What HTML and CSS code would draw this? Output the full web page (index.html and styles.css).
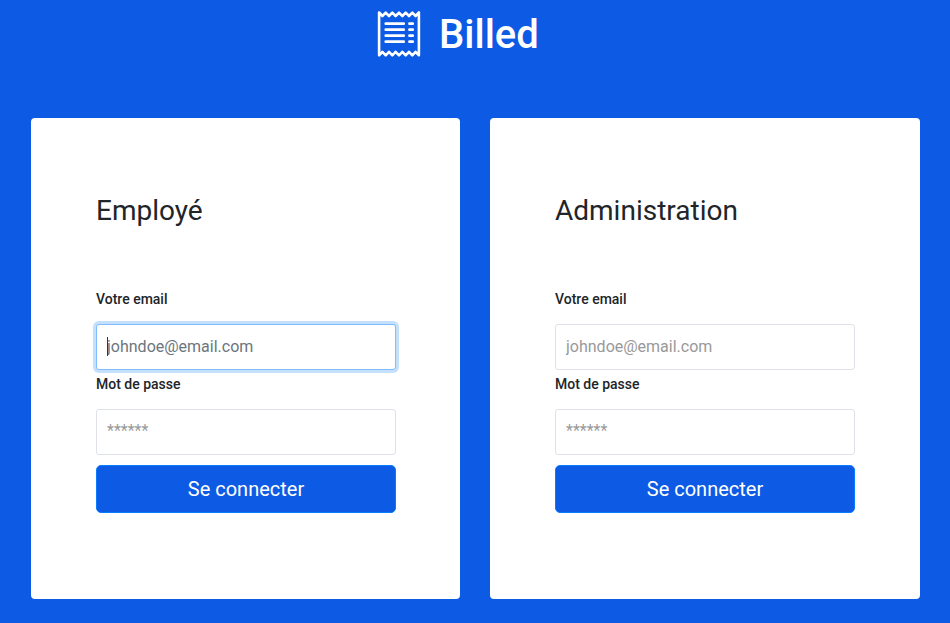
FILE: index.html
```
<!DOCTYPE html>
<html lang="fr">
<head>
<meta charset="utf-8">
<title>Billed</title>
<link rel="stylesheet" href="styles.css">
</head>
<body>
<header class="brand">
  <svg class="brand-icon" width="44" height="48" viewBox="0 0 44 48" fill="none" stroke="#fff" stroke-width="2.6" stroke-linecap="round" stroke-linejoin="round">
    <path d="M2.1 2.5L5.4 6L8.7 2.7L12 6L15.3 2.7L18.6 6L22 2.7L25.4 6L28.7 2.7L32 6L35.3 2.7L38.6 6L41.9 2.5V45.3L38.6 41.8L35.3 45.3L32 41.8L28.7 45.3L25.4 41.8L22 45.3L18.6 41.8L15.3 45.3L12 41.8L8.7 45.3L5.4 41.8L2.1 45.3Z"/>
    <path stroke-width="2.8" d="M8.8 13.7H26.7M8.8 19.7H26.7M8.8 25.7H26.7M8.8 31.7H26.7M32.5 13.7H35.7M32.5 19.7H35.7M32.5 25.7H35.7M32.5 31.7H35.7"/>
  </svg>
  <h1 class="brand-name">Billed</h1>
</header>
<main class="cards">
  <form class="card">
    <h2 class="card-title">Employé</h2>
    <label class="label" for="employee-email">Votre email</label>
    <div class="field field-active"><input class="input" id="employee-email" type="email" placeholder="johndoe@email.com"></div>
    <label class="label" for="employee-password">Mot de passe</label>
    <div class="field"><input class="input" id="employee-password" type="password" placeholder="******"></div>
    <button class="submit" type="submit">Se connecter</button>
  </form>
  <form class="card">
    <h2 class="card-title">Administration</h2>
    <label class="label" for="admin-email">Votre email</label>
    <div class="field"><input class="input" id="admin-email" type="email" placeholder="johndoe@email.com"></div>
    <label class="label" for="admin-password">Mot de passe</label>
    <div class="field"><input class="input" id="admin-password" type="password" placeholder="******"></div>
    <button class="submit" type="submit">Se connecter</button>
  </form>
</main>
</body>
</html>
```
FILE: styles.css
```
* {
  box-sizing: border-box;
}

body {
  margin: 0;
  height: 623px;
  overflow: hidden;
  background: #0d5ae5;
  color: #212529;
  font-family: Roboto, sans-serif;
}

.brand {
  display: flex;
  height: 118px;
  padding: 10px 0 0 377px;
}

.brand-icon {
  flex: none;
  margin-right: 18px;
}

.brand-name {
  margin: 0;
  color: #fff;
  font-size: 40px;
  font-weight: 500;
  line-height: 50px;
}

.cards {
  display: grid;
  grid-template-columns: 429px 430px;
  gap: 30px;
  padding: 0 30px 0 31px;
}

.card {
  height: 481px;
  padding: 76px 0 0 65px;
  border-radius: 4px;
  background: #fff;
}

.card-title {
  margin: 0 0 63px;
  font-size: 28px;
  font-weight: 400;
  line-height: 34px;
}

.label {
  display: block;
  height: 33px;
  font-size: 14px;
  font-weight: 500;
  line-height: 16px;
}

.field {
  position: relative;
  width: 300px;
  height: 46px;
  margin-bottom: 6px;
  border: 1px solid #dfe2e9;
  border-radius: 3px;
  background: #fff;
}

.input {
  display: block;
  width: 100%;
  height: 42px;
  padding: 0 10px;
  border: 0;
  outline: 0;
  background: transparent;
  font: 400 16px/24px Roboto, sans-serif;
}

.input[type="password"] {
  height: 40px;
}

.input::placeholder {
  color: #999;
  opacity: 1;
}

.field-active {
  border-color: #80bdff;
  box-shadow: 0 0 0 3px #c5e0fd;
}

.field-active .input::placeholder {
  color: #6c757d;
}

/* Text caret of the active field */
.field-active::before {
  content: "";
  position: absolute;
  top: 12px;
  left: 10px;
  width: 1px;
  height: 19px;
  background: #24375a;
}

.submit {
  display: block;
  width: 300px;
  height: 48px;
  margin-top: 10px;
  border: 1px solid #087bff;
  border-radius: 5px;
  background: #0d5ae5;
  color: #fff;
  font: 400 20px/30px Roboto, sans-serif;
}
```
